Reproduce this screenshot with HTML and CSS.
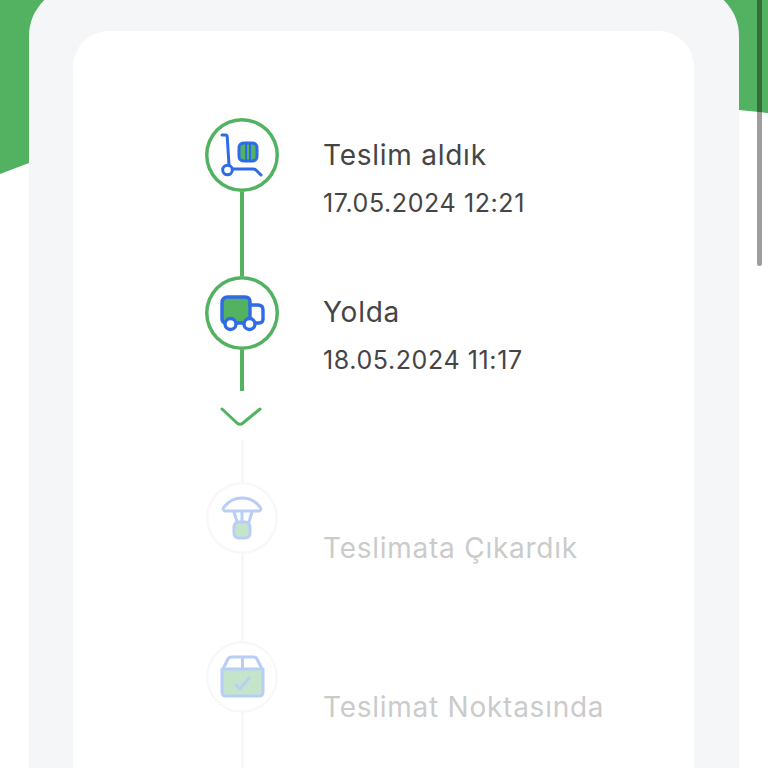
FILE: index.html
```html
<!DOCTYPE html>
<html lang="tr">
<head>
<meta charset="utf-8">
<title>Kargo takibi</title>
<link rel="stylesheet" href="styles.css">
</head>
<body>
<div class="hero"></div>
<main class="card">
  <section class="panel">
    <div class="step">
      <div class="rail">
        <div class="node">
          <svg class="icon" viewBox="0 0 74 74" fill="none" stroke="#2f6be6" stroke-width="3" stroke-linecap="round" stroke-linejoin="round">
            <path d="M17 17h3.500q1.500 0 1.700 1.500L24 47"/>
            <circle cx="22.500" cy="52" r="4.800"/>
            <path d="M28 51h20q2 0 3.500 1.500L56 57"/>
            <rect x="34" y="25" width="18" height="18" rx="4.500" fill="#52b261"/>
            <path d="M41 25v18M45 25v18" stroke-width="2"/>
          </svg>
        </div>
        <div class="line line-long"></div>
      </div>
      <div class="info">
        <p class="title">Teslim aldık</p>
        <p class="date">17.05.2024 12:21</p>
      </div>
    </div>
    <div class="step">
      <div class="rail">
        <div class="node">
          <svg class="icon" viewBox="0 0 74 74" fill="none" stroke="#2f6be6" stroke-width="3.400" stroke-linecap="round" stroke-linejoin="round">
            <path d="M20 47q-3-1-3-4V27q0-6 6-6h17q5 0 5 5v21H20Z" fill="#52b261"/>
            <path d="M45 29h8q5 0 5 5v9q0 4-4 4h-3"/>
            <circle cx="25.500" cy="48" r="5.500" fill="#fff"/>
            <circle cx="44.500" cy="48" r="5.500" fill="#fff"/>
          </svg>
        </div>
        <div class="line line-short"></div>
        <svg class="chevron" viewBox="0 0 42 20" fill="none" stroke="#52b261" stroke-width="3" stroke-linecap="round" stroke-linejoin="round">
          <path d="M2 2l15 14q3 2.500 6 0L40 2"/>
        </svg>
        <div class="line line-faded line-lead"></div>
      </div>
      <div class="info info-second">
        <p class="title">Yolda</p>
        <p class="date">18.05.2024 11:17</p>
      </div>
    </div>
    <div class="step">
      <div class="rail">
        <div class="node node-faded">
          <svg class="icon icon-faded" viewBox="-1 -1 72 72" fill="none" stroke="#2f6be6" stroke-width="3" stroke-linecap="round" stroke-linejoin="round">
            <path d="M18 28q-3-1-1-4 7-9 18-9t18 9q2 3-1 4Z"/>
            <path d="M27 29l3 10M35 29v10M45 29l-3 10"/>
            <rect x="27" y="39" width="16" height="16" rx="4.500" fill="#52b261"/>
          </svg>
        </div>
        <div class="line line-faded line-gap"></div>
      </div>
      <div class="info info-faded">
        <p class="title title-faded">Teslimata Çıkardık</p>
      </div>
    </div>
    <div class="step">
      <div class="rail">
        <div class="node node-faded">
          <svg class="icon icon-faded" viewBox="-1 -1 72 72" fill="none" stroke="#2f6be6" stroke-width="3" stroke-linecap="round" stroke-linejoin="round">
            <path d="M16 27l5-10q1-2 4-2h21q3 0 4 2l5 10M35.500 15v11"/>
            <path d="M15 27h41v23q0 4-4 4H19q-4 0-4-4Z" fill="#52b261"/>
            <path d="M29 43l4 4 9-11"/>
          </svg>
        </div>
        <div class="line line-faded line-tail"></div>
      </div>
      <div class="info info-faded">
        <p class="title title-faded">Teslimat Noktasında</p>
      </div>
    </div>
  </section>
</main>
<div class="scrollbar"></div>
</body>
</html>
```
FILE: styles.css
```css
* {
  box-sizing: border-box;
}

html,
body {
  height: 768px;
}

body {
  margin: 0;
  overflow: hidden;
  background: #fff;
  font-family: Inter, "Liberation Sans", sans-serif;
  font-weight: 400;
  color: #454545;
}

.hero {
  position: absolute;
  top: 0;
  left: 0;
  width: 768px;
  height: 180px;
  background: #52b261;
  clip-path: polygon(0 0, 100% 0, 100% 113px, 739px 110px, 29px 163px, 0 174px);
}

.scrollbar {
  position: absolute;
  top: 0;
  left: 757px;
  width: 5px;
  height: 266px;
  border-radius: 0 0 3px 3px;
  background: rgba(0, 0, 0, 0.38);
}

.card {
  position: relative;
  width: 710px;
  height: 900px;
  margin: -14px 0 0 29px;
  padding: 45px 45px 0 44px;
  border-radius: 50px 50px 0 0;
  background: #f5f6f8;
}

.panel {
  height: 100%;
  padding: 87px 0 0 132px;
  border-radius: 36px 36px 0 0;
  background: #fff;
}

.step {
  display: flex;
  gap: 44px;
}

.rail {
  display: flex;
  flex-direction: column;
  align-items: center;
  flex: none;
  width: 74px;
}

.node {
  flex: none;
  position: relative;
  width: 74px;
  height: 74px;
  border-radius: 50%;
  background: #fff;
  box-shadow: inset 0 0 0 3.5px #52b261;
}

.node-faded {
  width: 72px;
  height: 72px;
  box-shadow: inset 0 0 0 2.5px #f8f8fa;
}

.icon {
  position: absolute;
  inset: 0;
  width: 100%;
  height: 100%;
}

.icon-faded {
  opacity: 0.33;
}

.line {
  flex: none;
  width: 4px;
  background: #52b261;
}

.line-long {
  height: 84px;
}

.line-short {
  height: 41px;
}

.chevron {
  flex: none;
  width: 42px;
  height: 20px;
  margin: 16px 3px 0 0;
}

.line-faded {
  width: 3px;
  background: #f8f8f9;
}

.line-lead {
  height: 42px;
  margin-top: 13px;
}

.line-gap {
  height: 87px;
}

.line-tail {
  height: 70px;
}

.info {
  padding-top: 18px;
}

.info-second {
  padding-top: 17px;
}

.info-faded {
  padding-top: 46.5px;
}

.title,
.date {
  margin: 0;
}

.title {
  font-size: 28px;
  line-height: 38px;
  letter-spacing: 0.75px;
}

.title-faded {
  color: #cbcbcb;
}

.date {
  margin-top: 10px;
  font-size: 25px;
  line-height: 38px;
  letter-spacing: 0.6px;
}
```
